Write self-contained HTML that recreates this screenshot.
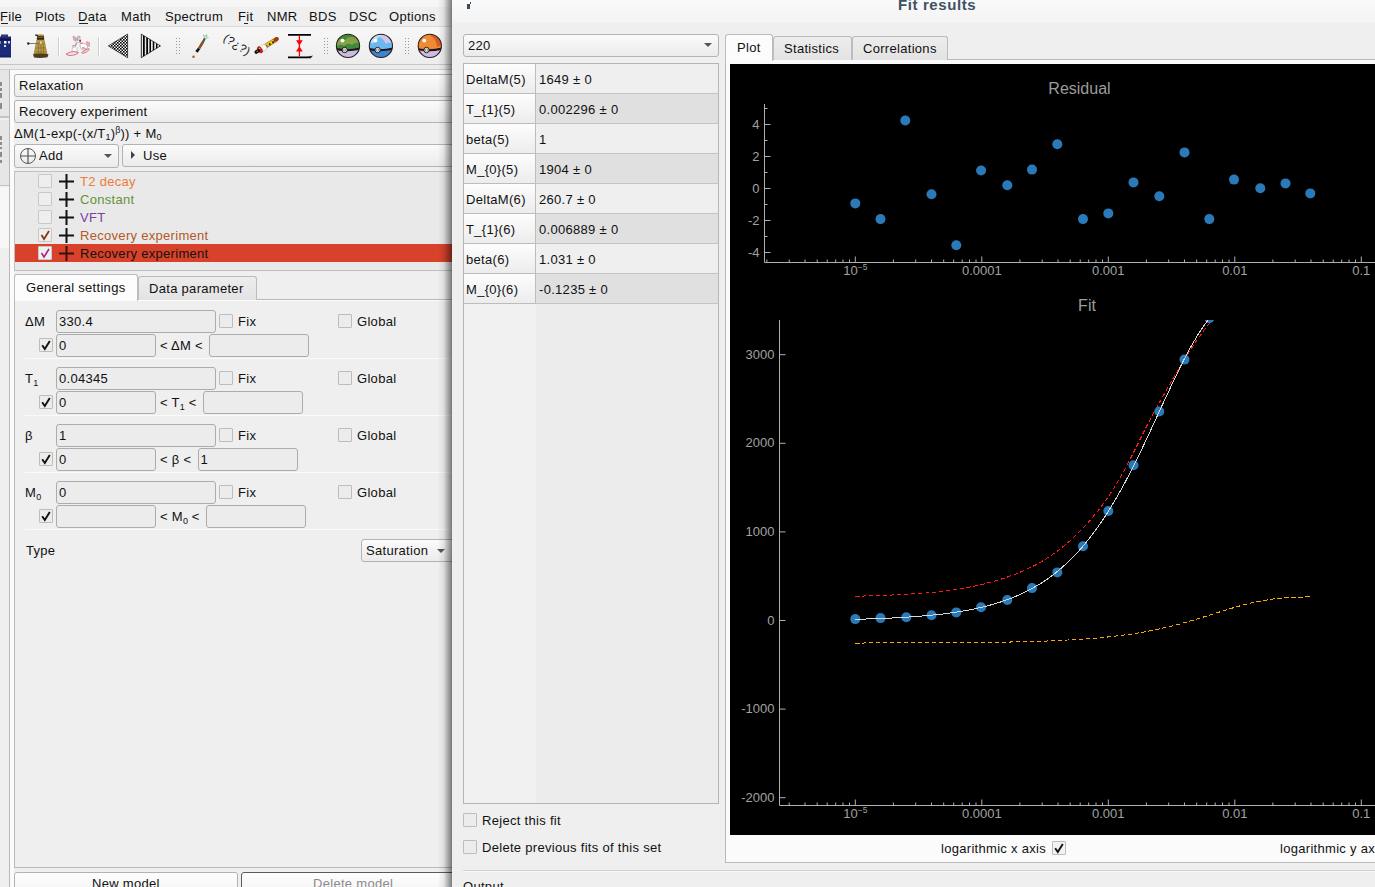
<!DOCTYPE html><html><head><meta charset="utf-8"><style>
*{box-sizing:border-box}
body{margin:0;width:1375px;height:887px;overflow:hidden;background:#efefef;position:relative;font-family:"Liberation Sans",sans-serif;font-size:13px;letter-spacing:.3px;color:#111}
.ab{position:absolute}
.t{position:absolute;white-space:nowrap;line-height:15px}
.btn{position:absolute;border:1px solid #b3b3b3;border-radius:3px;background:linear-gradient(#fbfbfb,#ebebeb)}
.ed{position:absolute;border:1px solid #acacac;border-radius:3px;background:#ececec}
.cb{position:absolute;width:14px;height:14px;border:1px solid #bdbdbd;border-radius:1px;background:#ececec}
.ck{position:absolute;left:1px;top:-2px;font-size:14px;line-height:14px;font-weight:bold;letter-spacing:0;color:#111}
.sep{position:absolute;height:1px;background:#dcdcdc;border-bottom:1px solid #fafafa}
.arr{position:absolute;width:0;height:0;border-left:5px solid transparent;border-right:5px solid transparent;border-top:5px solid #555}
</style></head><body>
<div class="ab" style="left:0;top:0;width:452px;height:7px;background:#f6f6f6"></div>
<div class="ab" style="left:0;top:7px;width:452px;height:20px;background:#efefef;border-bottom:1px solid #dadada"></div>
<div class="t" style="left:0px;top:9px">File</div>
<div class="t" style="left:35px;top:9px">Plots</div>
<div class="t" style="left:78px;top:9px">Data</div>
<div class="t" style="left:121px;top:9px">Math</div>
<div class="t" style="left:165px;top:9px">Spectrum</div>
<div class="t" style="left:238px;top:9px">Fit</div>
<div class="t" style="left:267px;top:9px">NMR</div>
<div class="t" style="left:309px;top:9px">BDS</div>
<div class="t" style="left:349px;top:9px">DSC</div>
<div class="t" style="left:389px;top:9px">Options</div>
<div class="ab" style="left:1px;top:23px;width:7px;height:1px;background:#222"></div>
<div class="ab" style="left:79px;top:23px;width:9px;height:1px;background:#222"></div>
<div class="ab" style="left:244px;top:23px;width:4px;height:1px;background:#222"></div>
<div class="ab" style="left:0;top:27px;width:452px;height:38px;background:linear-gradient(#f7f7f7,#ededed);border-bottom:1px solid #c6c6c6"></div>
<div class="ab" style="left:0;top:65px;width:452px;height:5px;background:#ececec;border-bottom:1px solid #cfcfcf"></div>
<svg class="ab" style="left:0;top:0" width="452" height="70" viewBox="0 0 452 70"><defs><pattern id="chk" width="3" height="3" patternUnits="userSpaceOnUse"><rect width="3" height="3" fill="#fff"/><rect width="1.6" height="1.6" fill="#000"/><rect x="1.5" y="1.5" width="1.6" height="1.6" fill="#000"/></pattern><pattern id="str" width="3.2" height="4" patternUnits="userSpaceOnUse" x="141.5"><rect width="3.2" height="4" fill="#e8e8e8"/><rect x="1.6" width="1.6" height="4" fill="#000"/></pattern><radialGradient id="gold" cx=".4" cy=".4" r=".7"><stop offset="0" stop-color="#e0c070"/><stop offset="1" stop-color="#8a6a2a"/></radialGradient></defs><rect x="-2" y="36.5" width="13" height="20" fill="#1d2a7a"/><rect x="1" y="34.5" width="7" height="2.5" fill="#2a3580"/><rect x="0" y="38.5" width="11" height="2" fill="#0e1540"/><rect x="4" y="41" width="2.5" height="2.5" fill="#fff"/><rect x="8" y="41" width="2" height="2.5" fill="#c8d0ff"/><rect x="4" y="45" width="2" height="2" fill="#dde"/><rect x="-1" y="41" width="2" height="3" fill="#889"/><rect x="-1" y="55.5" width="12" height="2" fill="#15206a"/><path d="M36.5 40 L44.5 40 L47.5 54.5 L33.5 54.5 Z" fill="#a8893c"/><path d="M37 34.8 Q40.5 33.8 44 34.8 L44.3 40 L36.7 40 Z" fill="#b39246"/><rect x="37" y="36.3" width="7" height="3.4" fill="#2e2410"/><path d="M37.3 37.5 H43.7" stroke="#9a8040" stroke-width=".6"/><path d="M36.5 41.2 H44.5 M35.8 46 H45.5 M35 50 H46.3" stroke="#d8c070" stroke-width=".7" opacity=".8"/><path d="M38.5 45 V53 M41 45 V53 M43.5 45 V53" stroke="#7a6020" stroke-width=".7" opacity=".7"/><rect x="40" y="41.5" width="1.6" height="2.2" fill="#f0e0a0"/><path d="M33 54.3 Q40 52.5 48.5 54.3 L47.5 57.2 Q40 58.5 34 57.5 Z" fill="#4a3c1c"/><path d="M28 43.5 H40" stroke="#8a7a60" stroke-width="1"/><circle cx="28.3" cy="43.5" r="1.2" fill="#222"/><path d="M35.3 35 L38 35.6" stroke="#222" stroke-width="1.4"/><path d="M58.5 37V56" stroke="#cfcfcf"/><path d="M59.5 37V56" stroke="#fff"/><path d="M98.5 37V56" stroke="#cfcfcf"/><path d="M99.5 37V56" stroke="#fff"/><g stroke-linejoin="round"><path d="M73 36 L76 37.5 L75.5 41 L73.5 40 Z" fill="#f2a8b4" stroke="#d88894" stroke-width=".6"/><path d="M78 36 L80.2 36.5 L79.5 39.5 L77.8 39 Z" fill="#f2a8b4" stroke="#d88894" stroke-width=".6"/><path d="M75.5 38 Q78 36.5 80 38.5 L80.5 42 L77 43 L75.5 41 Z" fill="#f4f4f4" stroke="#a0a0a0" stroke-width=".6"/><ellipse cx="77.3" cy="39.5" rx="1.2" ry="1.6" fill="#6ab0e0"/><rect x="79.2" y="39.8" width="1.8" height="2" fill="#e01818"/><path d="M76.5 42.5 L75.5 47 L72.5 47.5 L72 51.5 L74.5 53 L77 52 L77 47" fill="#fafafa" stroke="#b8b8b8" stroke-width=".7"/><path d="M72 46 L76 45.5 M75 44 h2" stroke="#c06070" stroke-width=".8" fill="none"/><path d="M66 54 Q70 51.5 74 51.5 L78.5 52.5 Q76 55.5 69 55.5 Z" fill="#f6e0e4" stroke="#c85868" stroke-width=".8"/><path d="M86.5 41.5 L89.5 42.5 L89.5 46.5 L87 45.5 Z" fill="#f2a8b4" stroke="#d88894" stroke-width=".6"/><path d="M80 43.5 Q84 42.5 87 44.5 L87.5 48 L85 50 L81.5 49.5 Q79.5 46 80 43.5 Z" fill="#fafafa" stroke="#a8a8a8" stroke-width=".7"/><path d="M82 48 Q84 47.5 85.5 48.5" stroke="#c04858" stroke-width=".9" fill="none"/><path d="M81.5 52.5 Q85 50 88.5 48.5 L89.5 49.5 Q86 53 82.5 53.5 Z" fill="#f6e0e4" stroke="#c85868" stroke-width=".8"/><path d="M80.5 42.8 L82.5 43.5" stroke="#d04050" stroke-width=".8"/></g><path d="M108.4 45.9 L127.6 34.1 L127.6 57.7 Z" fill="url(#chk)" stroke="#111" stroke-width=".7"/><path d="M141.3 34.1 L160.5 45.9 L141.3 57.7 Z" fill="url(#str)" stroke="#111" stroke-width=".7"/><rect x="176.0" y="38" width="1" height="1" fill="#9a9a9a"/><rect x="176.0" y="41" width="1" height="1" fill="#9a9a9a"/><rect x="176.0" y="44" width="1" height="1" fill="#9a9a9a"/><rect x="176.0" y="47" width="1" height="1" fill="#9a9a9a"/><rect x="176.0" y="50" width="1" height="1" fill="#9a9a9a"/><rect x="176.0" y="53" width="1" height="1" fill="#9a9a9a"/><rect x="179.0" y="38" width="1" height="1" fill="#9a9a9a"/><rect x="179.0" y="41" width="1" height="1" fill="#9a9a9a"/><rect x="179.0" y="44" width="1" height="1" fill="#9a9a9a"/><rect x="179.0" y="47" width="1" height="1" fill="#9a9a9a"/><rect x="179.0" y="50" width="1" height="1" fill="#9a9a9a"/><rect x="179.0" y="53" width="1" height="1" fill="#9a9a9a"/><rect x="324.0" y="38" width="1" height="1" fill="#9a9a9a"/><rect x="324.0" y="41" width="1" height="1" fill="#9a9a9a"/><rect x="324.0" y="44" width="1" height="1" fill="#9a9a9a"/><rect x="324.0" y="47" width="1" height="1" fill="#9a9a9a"/><rect x="324.0" y="50" width="1" height="1" fill="#9a9a9a"/><rect x="324.0" y="53" width="1" height="1" fill="#9a9a9a"/><rect x="327.0" y="38" width="1" height="1" fill="#9a9a9a"/><rect x="327.0" y="41" width="1" height="1" fill="#9a9a9a"/><rect x="327.0" y="44" width="1" height="1" fill="#9a9a9a"/><rect x="327.0" y="47" width="1" height="1" fill="#9a9a9a"/><rect x="327.0" y="50" width="1" height="1" fill="#9a9a9a"/><rect x="327.0" y="53" width="1" height="1" fill="#9a9a9a"/><rect x="405.0" y="38" width="1" height="1" fill="#9a9a9a"/><rect x="405.0" y="41" width="1" height="1" fill="#9a9a9a"/><rect x="405.0" y="44" width="1" height="1" fill="#9a9a9a"/><rect x="405.0" y="47" width="1" height="1" fill="#9a9a9a"/><rect x="405.0" y="50" width="1" height="1" fill="#9a9a9a"/><rect x="405.0" y="53" width="1" height="1" fill="#9a9a9a"/><rect x="408.0" y="38" width="1" height="1" fill="#9a9a9a"/><rect x="408.0" y="41" width="1" height="1" fill="#9a9a9a"/><rect x="408.0" y="44" width="1" height="1" fill="#9a9a9a"/><rect x="408.0" y="47" width="1" height="1" fill="#9a9a9a"/><rect x="408.0" y="50" width="1" height="1" fill="#9a9a9a"/><rect x="408.0" y="53" width="1" height="1" fill="#9a9a9a"/><path d="M193.5 56.5 L197 51" stroke="#f0ecd8" stroke-width="2.2"/><circle cx="193.5" cy="56.8" r="1.3" fill="#b06030"/><path d="M196.5 51.8 L199 48.5" stroke="#151515" stroke-width="2.8"/><path d="M199 48.5 L203.5 41" stroke="#8a5028" stroke-width="2.6"/><path d="M203.5 41 L205 38" stroke="#1a5a40" stroke-width="2"/><path d="M204.5 38.5 L203.5 34.5 M205 38.5 L208.5 37.5" stroke="#b0b0b0" stroke-width="1"/><path d="M205.5 36.5 L207 35" stroke="#40d040" stroke-width="1.5"/><text x="0" y="0" font-family="Liberation Sans" font-size="11.5" letter-spacing=".4" fill="#111" transform="translate(222.5,40) rotate(33)">(?¿?)</text><path d="M265.5 46.3 L276.2 39.4" stroke="#9a6a10" stroke-width="4.6" stroke-linecap="round"/><path d="M265.5 46.3 L276.2 39.4" stroke="#f2c418" stroke-width="3.4" stroke-linecap="round"/><path d="M275.2 40 L277 38.8" stroke="#a03818" stroke-width="3.6" stroke-linecap="round"/><circle cx="266.6" cy="46.2" r=".95" fill="#111"/><circle cx="269.8" cy="44.2" r=".95" fill="#111"/><circle cx="273" cy="42.2" r=".95" fill="#111"/><ellipse cx="263" cy="48" rx="3.9" ry="3.3" fill="#fafafa" stroke="#b8b8b8" stroke-width=".6" transform="rotate(-33 263 48)"/><ellipse cx="260" cy="49.8" rx="2.1" ry="3.5" fill="#d81c1c" stroke="#901010" stroke-width=".5" transform="rotate(-33 260 49.8)"/><circle cx="259.6" cy="48.4" r=".7" fill="#f8b0b0"/><path d="M256.3 52 L258.3 50.7" stroke="#111" stroke-width="3.6" stroke-linecap="round"/><path d="M256.7 51.6 L258 50.9" stroke="#e8b818" stroke-width="1"/><path d="M288 34.9 H311 M288 57.3 H311" stroke="#000" stroke-width="1.7"/><path d="M307 57 L313 55.6 L311 58 Z" fill="#222"/><path d="M299.4 35.5 V56.5" stroke="#ff0000" stroke-width="1.3"/><path d="M296 40.3 H302.8 L299.4 45.4 Z M296 51.6 H302.8 L299.4 46.2 Z" fill="#ff0000"/><clipPath id="bc348"><circle cx="348" cy="45.9" r="11.6"/></clipPath><circle cx="348" cy="45.9" r="11.6" fill="#3f8a3a"/><g clip-path="url(#bc348)"><path d="M336 41 Q340 37 345 40 Q349 35 356 38 L361 44 Q356 41 352 45 Q348 42 344 46 Q340 43 336 47 Z" fill="#b8b050" opacity=".6"/><path d="M335.4 49.1 Q348 51.6 360.6 48.6 V58.5 H335.4 Z" fill="#c9bde6"/><path d="M335.4 49.1 Q348 51.6 360.6 48.6" stroke="#1e1414" stroke-width="2.2" fill="none"/></g><circle cx="348" cy="45.9" r="11.6" fill="none" stroke="#2a1e1e" stroke-width="1.1"/><circle cx="344.7" cy="50.0" r="2.7" fill="#f4f4f4" stroke="#1e1414" stroke-width="1"/><circle cx="344.7" cy="50.0" r="1.2" fill="none" stroke="#666" stroke-width=".6"/><ellipse cx="342.5" cy="40.6" rx="2" ry="1.9" fill="#fff"/><clipPath id="bc380"><circle cx="380.9" cy="45.9" r="11.6"/></clipPath><circle cx="380.9" cy="45.9" r="11.6" fill="#6ab8f0"/><g clip-path="url(#bc380)"><path d="M380 33 L393 35 L393 44 Q388 41 386 44 Q383 38 379 37 Z" fill="#cfc6ea"/><path d="M370 40 Q375 34 381 35 Q377 39 372 44 Z" fill="#b8e4fa"/><path d="M368.29999999999995 49.1 Q380.9 51.6 393.5 48.6 V58.5 H368.29999999999995 Z" fill="#3a86d6"/><path d="M368.29999999999995 49.1 Q380.9 51.6 393.5 48.6" stroke="#1e1414" stroke-width="2.2" fill="none"/></g><circle cx="380.9" cy="45.9" r="11.6" fill="none" stroke="#2a1e1e" stroke-width="1.1"/><circle cx="377.59999999999997" cy="50.0" r="2.7" fill="#f4f4f4" stroke="#1e1414" stroke-width="1"/><circle cx="377.59999999999997" cy="50.0" r="1.2" fill="none" stroke="#666" stroke-width=".6"/><ellipse cx="375.4" cy="40.6" rx="2" ry="1.9" fill="#fff"/><clipPath id="bc429"><circle cx="429.8" cy="45.9" r="11.6"/></clipPath><circle cx="429.8" cy="45.9" r="11.6" fill="#f08a30"/><g clip-path="url(#bc429)"><path d="M431 33 Q440 35 443 44 L437 47 Q437 40 430 35 Z" fill="#d85a28"/><path d="M417.2 49.1 Q429.8 51.6 442.40000000000003 48.6 V58.5 H417.2 Z" fill="#c9bde6"/><path d="M417.2 49.1 Q429.8 51.6 442.40000000000003 48.6" stroke="#1e1414" stroke-width="2.2" fill="none"/></g><circle cx="429.8" cy="45.9" r="11.6" fill="none" stroke="#2a1e1e" stroke-width="1.1"/><circle cx="426.5" cy="50.0" r="2.7" fill="#f4f4f4" stroke="#1e1414" stroke-width="1"/><circle cx="426.5" cy="50.0" r="1.2" fill="none" stroke="#666" stroke-width=".6"/><ellipse cx="424.3" cy="40.6" rx="2" ry="1.9" fill="#fff"/></svg>
<div class="ab" style="left:0;top:70px;width:10px;height:817px;background:#efefef;border-right:1px solid #b8b8b8"></div>
<div class="ab" style="left:0;top:70px;width:9px;height:48px;background:#e6e6e6;border-bottom:2px solid #c4c4c4"></div>
<div class="ab" style="left:0;top:120px;width:9px;height:66px;background:#e6e6e6;border-bottom:1px solid #c4c4c4"></div>
<div class="ab" style="left:0;top:187px;width:9px;height:61px;background:#f7f7f7"></div>
<div class="ab" style="left:0;top:82px;width:2px;height:4px;background:#8c8c8c"></div>
<div class="ab" style="left:0;top:88px;width:2px;height:3px;background:#8c8c8c"></div>
<div class="ab" style="left:0;top:93px;width:2px;height:5px;background:#8c8c8c"></div>
<div class="ab" style="left:0;top:103px;width:2px;height:6px;background:#8c8c8c"></div>
<div class="ab" style="left:0;top:136px;width:2px;height:4px;background:#8c8c8c"></div>
<div class="ab" style="left:0;top:142px;width:2px;height:3px;background:#8c8c8c"></div>
<div class="ab" style="left:0;top:147px;width:2px;height:2px;background:#8c8c8c"></div>
<div class="ab" style="left:0;top:152px;width:2px;height:5px;background:#8c8c8c"></div>
<div class="ab" style="left:0;top:160px;width:2px;height:3px;background:#8c8c8c"></div>
<div class="ab" style="left:10px;top:70px;width:442px;height:817px;background:#efefef"></div><div class="ab" style="left:10px;top:70px;width:4px;height:817px;background:#fbfbfb"></div><div class="ab" style="left:10px;top:70px;width:442px;height:4px;background:#fbfbfb"></div>
<div class="btn" style="left:14px;top:74px;width:450px;height:23px"></div>
<div class="t" style="left:19px;top:78px">Relaxation</div>
<div class="btn" style="left:14px;top:100px;width:450px;height:23px"></div>
<div class="t" style="left:19px;top:104px">Recovery experiment</div>
<div class="t" style="left:14px;top:126px">ΔM(1-exp(-(x/T<sub style="font-size:9px;letter-spacing:0;vertical-align:-2px;line-height:0">1</sub>)<sup style="font-size:9px;letter-spacing:0;vertical-align:5px;line-height:0">β</sup>)) + M<sub style="font-size:9px;letter-spacing:0;vertical-align:-2px;line-height:0">0</sub></div>
<div class="btn" style="left:14px;top:144px;width:105px;height:24px"></div>
<svg class="ab" style="left:19px;top:147px" width="18" height="18"><circle cx="9" cy="9" r="7.5" fill="none" stroke="#555" stroke-width="1"/><path d="M9 2V16M2 9H16" stroke="#555" stroke-width="1.2"/></svg>
<div class="t" style="left:39px;top:148px">Add</div>
<div class="arr" style="left:104px;top:154px;border-width:4.5px 4px 0 4px"></div>
<div class="btn" style="left:122px;top:144px;width:340px;height:23px"></div>
<div class="ab" style="left:131px;top:151px;width:0;height:0;border-top:4px solid transparent;border-bottom:4px solid transparent;border-left:4px solid #444"></div>
<div class="t" style="left:143px;top:148px">Use</div>
<div class="ab" style="left:14px;top:171px;width:450px;height:100px;background:#e9e9e9;border:1px solid #c0c0c0"></div>
<div class="cb" style="left:38px;top:174px;width:14px;height:14px;border-color:#c8c8c8;background:#eeeeee"></div>
<svg class="ab" style="left:57.5px;top:173px" width="17" height="17"><path d="M8.5 1V16M1 8.5H16" stroke="#111" stroke-width="2"/></svg>
<div class="t" style="left:80px;top:174px;color:#ee7a3c">T2 decay</div>
<div class="cb" style="left:38px;top:192px;width:14px;height:14px;border-color:#c8c8c8;background:#eeeeee"></div>
<svg class="ab" style="left:57.5px;top:191px" width="17" height="17"><path d="M8.5 1V16M1 8.5H16" stroke="#111" stroke-width="2"/></svg>
<div class="t" style="left:80px;top:192px;color:#64923a">Constant</div>
<div class="cb" style="left:38px;top:210px;width:14px;height:14px;border-color:#c8c8c8;background:#eeeeee"></div>
<svg class="ab" style="left:57.5px;top:209px" width="17" height="17"><path d="M8.5 1V16M1 8.5H16" stroke="#111" stroke-width="2"/></svg>
<div class="t" style="left:80px;top:210px;color:#7b3fa0">VFT</div>
<div class="cb" style="left:38px;top:228px;width:14px;height:14px;border-color:#c8c8c8;background:#eeeeee"></div>
<svg class="ab" style="left:39px;top:229px" width="12" height="12"><path d="M2.5 6 L5 10 L10 2" fill="none" stroke="#8a3b12" stroke-width="1.8"/></svg>
<svg class="ab" style="left:57.5px;top:227px" width="17" height="17"><path d="M8.5 1V16M1 8.5H16" stroke="#111" stroke-width="2"/></svg>
<div class="t" style="left:80px;top:228px;color:#b15a2a">Recovery experiment</div>
<div class="ab" style="left:15px;top:244px;width:437px;height:18px;background:#d8422a"></div>
<div class="cb" style="left:38px;top:246px;width:14px;height:14px;border-color:#c8c8c8;background:#f0f0f0"></div>
<svg class="ab" style="left:39px;top:247px" width="12" height="12"><path d="M2.5 6 L5 10 L10 2" fill="none" stroke="#b0207a" stroke-width="1.6"/></svg>
<svg class="ab" style="left:57.5px;top:245px" width="17" height="17"><path d="M8.5 1V16M1 8.5H16" stroke="#3a1008" stroke-width="2"/></svg>
<div class="t" style="left:80px;top:246px;color:#111">Recovery experiment</div>
<div class="ab" style="left:14px;top:299px;width:450px;height:569px;border:1px solid #b9b9b9;background:#efefef"></div>
<div class="ab" style="left:15px;top:300px;width:437px;height:1px;background:#fcfcfc"></div>
<div class="ab" style="left:138px;top:276px;width:119px;height:24px;border:1px solid #bcbcbc;border-bottom:none;border-radius:3px 3px 0 0;background:linear-gradient(#ededed,#e3e3e3)"></div>
<div class="t" style="left:149px;top:281px">Data parameter</div>
<div class="ab" style="left:14px;top:274px;width:124px;height:27px;border:1px solid #bcbcbc;border-bottom:none;border-radius:3px 3px 0 0;background:#fcfcfc"></div>
<div class="t" style="left:26px;top:280px">General settings</div>
<div class="t" style="left:25px;top:314px">ΔM</div>
<div class="ed" style="left:56px;top:310px;width:160px;height:23px"></div>
<div class="t" style="left:59px;top:314px">330.4</div>
<div class="cb" style="left:219px;top:314px"></div>
<div class="t" style="left:238px;top:314px">Fix</div>
<div class="cb" style="left:338px;top:314px"></div>
<div class="t" style="left:357px;top:314px">Global</div>
<div class="cb" style="left:39px;top:338px"></div>
<svg class="ab" style="left:40px;top:339px" width="12" height="12"><path d="M2.2 6.2 L4.8 10 L9.8 2" fill="none" stroke="#111" stroke-width="1.9"/></svg>
<div class="ed" style="left:56px;top:334px;width:100px;height:23px"></div>
<div class="t" style="left:59px;top:338px">0</div>
<div class="t" style="left:160px;top:338px">< ΔM <</div>
<div class="ed" style="left:209px;top:334px;width:100px;height:23px"></div>
<div class="t" style="left:211.5px;top:338px"></div>
<div class="sep" style="left:25px;top:358px;width:430px"></div>
<div class="t" style="left:25px;top:371px">T<sub style="font-size:9px;letter-spacing:0;vertical-align:-3px;line-height:0">1</sub></div>
<div class="ed" style="left:56px;top:367px;width:160px;height:23px"></div>
<div class="t" style="left:59px;top:371px">0.04345</div>
<div class="cb" style="left:219px;top:371px"></div>
<div class="t" style="left:238px;top:371px">Fix</div>
<div class="cb" style="left:338px;top:371px"></div>
<div class="t" style="left:357px;top:371px">Global</div>
<div class="cb" style="left:39px;top:395px"></div>
<svg class="ab" style="left:40px;top:396px" width="12" height="12"><path d="M2.2 6.2 L4.8 10 L9.8 2" fill="none" stroke="#111" stroke-width="1.9"/></svg>
<div class="ed" style="left:56px;top:391px;width:100px;height:23px"></div>
<div class="t" style="left:59px;top:395px">0</div>
<div class="t" style="left:160px;top:395px">< T<sub style="font-size:9px;letter-spacing:0;vertical-align:-3px;line-height:0">1</sub> <</div>
<div class="ed" style="left:203px;top:391px;width:100px;height:23px"></div>
<div class="t" style="left:205.5px;top:395px"></div>
<div class="sep" style="left:25px;top:415px;width:430px"></div>
<div class="t" style="left:25px;top:428px">β</div>
<div class="ed" style="left:56px;top:424px;width:160px;height:23px"></div>
<div class="t" style="left:59px;top:428px">1</div>
<div class="cb" style="left:219px;top:428px"></div>
<div class="t" style="left:238px;top:428px">Fix</div>
<div class="cb" style="left:338px;top:428px"></div>
<div class="t" style="left:357px;top:428px">Global</div>
<div class="cb" style="left:39px;top:452px"></div>
<svg class="ab" style="left:40px;top:453px" width="12" height="12"><path d="M2.2 6.2 L4.8 10 L9.8 2" fill="none" stroke="#111" stroke-width="1.9"/></svg>
<div class="ed" style="left:56px;top:448px;width:100px;height:23px"></div>
<div class="t" style="left:59px;top:452px">0</div>
<div class="t" style="left:160px;top:452px">< β <</div>
<div class="ed" style="left:198px;top:448px;width:100px;height:23px"></div>
<div class="t" style="left:200.5px;top:452px">1</div>
<div class="sep" style="left:25px;top:472px;width:430px"></div>
<div class="t" style="left:25px;top:485px">M<sub style="font-size:9px;letter-spacing:0;vertical-align:-3px;line-height:0">0</sub></div>
<div class="ed" style="left:56px;top:481px;width:160px;height:23px"></div>
<div class="t" style="left:59px;top:485px">0</div>
<div class="cb" style="left:219px;top:485px"></div>
<div class="t" style="left:238px;top:485px">Fix</div>
<div class="cb" style="left:338px;top:485px"></div>
<div class="t" style="left:357px;top:485px">Global</div>
<div class="cb" style="left:39px;top:509px"></div>
<svg class="ab" style="left:40px;top:510px" width="12" height="12"><path d="M2.2 6.2 L4.8 10 L9.8 2" fill="none" stroke="#111" stroke-width="1.9"/></svg>
<div class="ed" style="left:56px;top:505px;width:100px;height:23px"></div>
<div class="t" style="left:59px;top:509px"></div>
<div class="t" style="left:160px;top:509px">< M<sub style="font-size:9px;letter-spacing:0;vertical-align:-3px;line-height:0">0</sub> <</div>
<div class="ed" style="left:206px;top:505px;width:100px;height:23px"></div>
<div class="t" style="left:208.5px;top:509px"></div>
<div class="sep" style="left:25px;top:529px;width:430px"></div>
<div class="t" style="left:26px;top:543px">Type</div>
<div class="btn" style="left:361px;top:539px;width:100px;height:23px"></div>
<div class="t" style="left:366px;top:543px">Saturation</div>
<div class="arr" style="left:437px;top:549px;border-width:4px 4px 0 4px"></div>
<div class="btn" style="left:14px;top:872px;width:224px;height:24px;background:linear-gradient(#fefefe,#f2f2f2)"></div>
<div class="t" style="left:92px;top:876px">New model</div>
<div class="btn" style="left:241px;top:872px;width:224px;height:24px;border-color:#5a5a5a;background:linear-gradient(#fefefe,#f2f2f2)"></div>
<div class="t" style="left:313px;top:876px;color:#8a8a8a">Delete model</div>
<div class="ab" style="left:438px;top:0;width:14px;height:887px;background:linear-gradient(90deg,rgba(0,0,0,0),rgba(0,0,0,.08) 40%,rgba(0,0,0,.5))"></div>
<div class="ab" style="left:452px;top:0;width:923px;height:887px;background:#efefef"></div>
<div class="ab" style="left:452px;top:0;width:923px;height:23px;background:linear-gradient(#fafafa,#f3f3f3)"></div>
<div class="ab" style="left:467px;top:4px;width:3px;height:5px;background:#3a4c58"></div><div class="ab" style="left:470px;top:2px;width:1px;height:2px;background:#3a4c58"></div>
<div class="t" style="left:898px;top:-3px;font-weight:bold;font-size:15px;letter-spacing:.6px;color:#3e5262">Fit results</div>
<div class="btn" style="left:463px;top:34px;width:256px;height:23px"></div>
<div class="t" style="left:468px;top:38px">220</div>
<div class="arr" style="left:704px;top:43px;border-width:4.5px 4px 0 4px"></div>
<div class="ab" style="left:463px;top:63px;width:256px;height:741px;border:1px solid #b5b5b5;background:#ececec"></div>
<div class="ab" style="left:464px;top:64px;width:72px;height:739px;background:#f0f0f0"></div>
<div class="ab" style="left:464px;top:64px;width:72px;height:30px;background:linear-gradient(#fdfdfd,#ececec);border-right:1px solid #bdbdbd;border-bottom:1px solid #bdbdbd"></div>
<div class="ab" style="left:536px;top:64px;width:182px;height:30px;background:#efefef;border-bottom:1px solid #c4c4c4"></div>
<div class="t" style="left:466px;top:72px">DeltaM(5)</div>
<div class="t" style="left:539px;top:72px">1649 ± 0</div>
<div class="ab" style="left:464px;top:94px;width:72px;height:30px;background:linear-gradient(#fdfdfd,#ececec);border-right:1px solid #bdbdbd;border-bottom:1px solid #bdbdbd"></div>
<div class="ab" style="left:536px;top:94px;width:182px;height:30px;background:#e0e0e0;border-bottom:1px solid #c4c4c4"></div>
<div class="t" style="left:466px;top:102px">T_{1}(5)</div>
<div class="t" style="left:539px;top:102px">0.002296 ± 0</div>
<div class="ab" style="left:464px;top:124px;width:72px;height:30px;background:linear-gradient(#fdfdfd,#ececec);border-right:1px solid #bdbdbd;border-bottom:1px solid #bdbdbd"></div>
<div class="ab" style="left:536px;top:124px;width:182px;height:30px;background:#efefef;border-bottom:1px solid #c4c4c4"></div>
<div class="t" style="left:466px;top:132px">beta(5)</div>
<div class="t" style="left:539px;top:132px">1</div>
<div class="ab" style="left:464px;top:154px;width:72px;height:30px;background:linear-gradient(#fdfdfd,#ececec);border-right:1px solid #bdbdbd;border-bottom:1px solid #bdbdbd"></div>
<div class="ab" style="left:536px;top:154px;width:182px;height:30px;background:#e0e0e0;border-bottom:1px solid #c4c4c4"></div>
<div class="t" style="left:466px;top:162px">M_{0}(5)</div>
<div class="t" style="left:539px;top:162px">1904 ± 0</div>
<div class="ab" style="left:464px;top:184px;width:72px;height:30px;background:linear-gradient(#fdfdfd,#ececec);border-right:1px solid #bdbdbd;border-bottom:1px solid #bdbdbd"></div>
<div class="ab" style="left:536px;top:184px;width:182px;height:30px;background:#efefef;border-bottom:1px solid #c4c4c4"></div>
<div class="t" style="left:466px;top:192px">DeltaM(6)</div>
<div class="t" style="left:539px;top:192px">260.7 ± 0</div>
<div class="ab" style="left:464px;top:214px;width:72px;height:30px;background:linear-gradient(#fdfdfd,#ececec);border-right:1px solid #bdbdbd;border-bottom:1px solid #bdbdbd"></div>
<div class="ab" style="left:536px;top:214px;width:182px;height:30px;background:#e0e0e0;border-bottom:1px solid #c4c4c4"></div>
<div class="t" style="left:466px;top:222px">T_{1}(6)</div>
<div class="t" style="left:539px;top:222px">0.006889 ± 0</div>
<div class="ab" style="left:464px;top:244px;width:72px;height:30px;background:linear-gradient(#fdfdfd,#ececec);border-right:1px solid #bdbdbd;border-bottom:1px solid #bdbdbd"></div>
<div class="ab" style="left:536px;top:244px;width:182px;height:30px;background:#efefef;border-bottom:1px solid #c4c4c4"></div>
<div class="t" style="left:466px;top:252px">beta(6)</div>
<div class="t" style="left:539px;top:252px">1.031 ± 0</div>
<div class="ab" style="left:464px;top:274px;width:72px;height:30px;background:linear-gradient(#fdfdfd,#ececec);border-right:1px solid #bdbdbd;border-bottom:1px solid #bdbdbd"></div>
<div class="ab" style="left:536px;top:274px;width:182px;height:30px;background:#e0e0e0;border-bottom:1px solid #c4c4c4"></div>
<div class="t" style="left:466px;top:282px">M_{0}(6)</div>
<div class="t" style="left:539px;top:282px">-0.1235 ± 0</div>
<div class="cb" style="left:463px;top:813px"></div>
<div class="t" style="left:482px;top:813px">Reject this fit</div>
<div class="cb" style="left:463px;top:840px"></div>
<div class="t" style="left:482px;top:840px">Delete previous fits of this set</div>
<div class="ab" style="left:463px;top:870px;width:912px;height:1px;background:#d2d2d2"></div><div class="ab" style="left:463px;top:871px;width:912px;height:1px;background:#f8f8f8"></div>
<div class="t" style="left:463px;top:879px">Output</div>
<div class="ab" style="left:725px;top:59px;width:660px;height:804px;border:1px solid #b9b9b9;background:#fbfbfb"></div>
<div class="ab" style="left:773px;top:36px;width:79px;height:24px;border:1px solid #bcbcbc;border-bottom:none;border-radius:3px 3px 0 0;background:linear-gradient(#ededed,#e3e3e3)"></div>
<div class="t" style="left:784px;top:41px">Statistics</div>
<div class="ab" style="left:852px;top:36px;width:96px;height:24px;border:1px solid #bcbcbc;border-bottom:none;border-radius:3px 3px 0 0;background:linear-gradient(#ededed,#e3e3e3)"></div>
<div class="t" style="left:863px;top:41px">Correlations</div>
<div class="ab" style="left:725px;top:34px;width:48px;height:27px;border:1px solid #bcbcbc;border-bottom:none;border-radius:3px 3px 0 0;background:#fcfcfc"></div>
<div class="t" style="left:737px;top:40px">Plot</div>
<svg class="ab" style="left:730px;top:64px" width="645" height="771" viewBox="0 0 645 771"><rect width="645" height="771" fill="#000"/><text x="349.5" y="30" fill="#9c9c9c" font-size="16" text-anchor="middle" font-family="Liberation Sans" letter-spacing="0">Residual</text><path d="M34.5 40V198.5H645" fill="none" stroke="#b0b0b0" stroke-width="1"/><path d="M34.5 60.5h6" stroke="#b0b0b0"/><text x="29.5" y="64.5" fill="#a2a2a2" font-size="13" text-anchor="end" font-family="Liberation Sans" letter-spacing="0">4</text><path d="M34.5 92.5h6" stroke="#b0b0b0"/><text x="29.5" y="96.5" fill="#a2a2a2" font-size="13" text-anchor="end" font-family="Liberation Sans" letter-spacing="0">2</text><path d="M34.5 124.5h6" stroke="#b0b0b0"/><text x="29.5" y="128.5" fill="#a2a2a2" font-size="13" text-anchor="end" font-family="Liberation Sans" letter-spacing="0">0</text><path d="M34.5 156.5h6" stroke="#b0b0b0"/><text x="29.5" y="160.5" fill="#a2a2a2" font-size="13" text-anchor="end" font-family="Liberation Sans" letter-spacing="0">-2</text><path d="M34.5 188.5h6" stroke="#b0b0b0"/><text x="29.5" y="192.5" fill="#a2a2a2" font-size="13" text-anchor="end" font-family="Liberation Sans" letter-spacing="0">-4</text><path d="M34.5 44.5h3" stroke="#b0b0b0"/><path d="M34.5 76.5h3" stroke="#b0b0b0"/><path d="M34.5 108.5h3" stroke="#b0b0b0"/><path d="M34.5 140.5h3" stroke="#b0b0b0"/><path d="M34.5 172.5h3" stroke="#b0b0b0"/><path d="M36.9 198.5v-3" stroke="#b0b0b0"/><path d="M59.2 198.5v-3" stroke="#b0b0b0"/><path d="M75.0 198.5v-3" stroke="#b0b0b0"/><path d="M87.2 198.5v-3" stroke="#b0b0b0"/><path d="M97.2 198.5v-3" stroke="#b0b0b0"/><path d="M105.7 198.5v-3" stroke="#b0b0b0"/><path d="M113.0 198.5v-3" stroke="#b0b0b0"/><path d="M119.5 198.5v-3" stroke="#b0b0b0"/><path d="M125.3 198.5v-6" stroke="#b0b0b0"/><path d="M163.4 198.5v-3" stroke="#b0b0b0"/><path d="M185.7 198.5v-3" stroke="#b0b0b0"/><path d="M201.5 198.5v-3" stroke="#b0b0b0"/><path d="M213.7 198.5v-3" stroke="#b0b0b0"/><path d="M223.7 198.5v-3" stroke="#b0b0b0"/><path d="M232.2 198.5v-3" stroke="#b0b0b0"/><path d="M239.5 198.5v-3" stroke="#b0b0b0"/><path d="M246.0 198.5v-3" stroke="#b0b0b0"/><path d="M251.8 198.5v-6" stroke="#b0b0b0"/><path d="M289.9 198.5v-3" stroke="#b0b0b0"/><path d="M312.2 198.5v-3" stroke="#b0b0b0"/><path d="M328.0 198.5v-3" stroke="#b0b0b0"/><path d="M340.2 198.5v-3" stroke="#b0b0b0"/><path d="M350.2 198.5v-3" stroke="#b0b0b0"/><path d="M358.7 198.5v-3" stroke="#b0b0b0"/><path d="M366.0 198.5v-3" stroke="#b0b0b0"/><path d="M372.5 198.5v-3" stroke="#b0b0b0"/><path d="M378.3 198.5v-6" stroke="#b0b0b0"/><path d="M416.4 198.5v-3" stroke="#b0b0b0"/><path d="M438.7 198.5v-3" stroke="#b0b0b0"/><path d="M454.5 198.5v-3" stroke="#b0b0b0"/><path d="M466.7 198.5v-3" stroke="#b0b0b0"/><path d="M476.7 198.5v-3" stroke="#b0b0b0"/><path d="M485.2 198.5v-3" stroke="#b0b0b0"/><path d="M492.5 198.5v-3" stroke="#b0b0b0"/><path d="M499.0 198.5v-3" stroke="#b0b0b0"/><path d="M504.8 198.5v-6" stroke="#b0b0b0"/><path d="M542.9 198.5v-3" stroke="#b0b0b0"/><path d="M565.2 198.5v-3" stroke="#b0b0b0"/><path d="M581.0 198.5v-3" stroke="#b0b0b0"/><path d="M593.2 198.5v-3" stroke="#b0b0b0"/><path d="M603.2 198.5v-3" stroke="#b0b0b0"/><path d="M611.7 198.5v-3" stroke="#b0b0b0"/><path d="M619.0 198.5v-3" stroke="#b0b0b0"/><path d="M625.5 198.5v-3" stroke="#b0b0b0"/><path d="M631.3 198.5v-6" stroke="#b0b0b0"/><text x="125.29999999999995" y="210.5" fill="#a2a2a2" font-size="13" text-anchor="middle" font-family="Liberation Sans" letter-spacing="0">10<tspan font-size="8.5" dy="-4.5">−5</tspan></text><text x="251.79999999999995" y="210.5" fill="#a2a2a2" font-size="13" text-anchor="middle" font-family="Liberation Sans" letter-spacing="0">0.0001</text><text x="378.29999999999995" y="210.5" fill="#a2a2a2" font-size="13" text-anchor="middle" font-family="Liberation Sans" letter-spacing="0">0.001</text><text x="504.79999999999995" y="210.5" fill="#a2a2a2" font-size="13" text-anchor="middle" font-family="Liberation Sans" letter-spacing="0">0.01</text><text x="631.3" y="210.5" fill="#a2a2a2" font-size="13" text-anchor="middle" font-family="Liberation Sans" letter-spacing="0">0.1</text><circle cx="125.3" cy="139.4" r="5" fill="#2a7ab9"/><circle cx="150.5" cy="155.1" r="5" fill="#2a7ab9"/><circle cx="175.3" cy="56.5" r="5" fill="#2a7ab9"/><circle cx="201.5" cy="130.3" r="5" fill="#2a7ab9"/><circle cx="226.3" cy="181.3" r="5" fill="#2a7ab9"/><circle cx="251.1" cy="106.5" r="5" fill="#2a7ab9"/><circle cx="277.3" cy="121.3" r="5" fill="#2a7ab9"/><circle cx="302.0" cy="105.6" r="5" fill="#2a7ab9"/><circle cx="327.3" cy="80.3" r="5" fill="#2a7ab9"/><circle cx="353.0" cy="155.1" r="5" fill="#2a7ab9"/><circle cx="378.3" cy="149.4" r="5" fill="#2a7ab9"/><circle cx="403.5" cy="118.4" r="5" fill="#2a7ab9"/><circle cx="429.3" cy="132.3" r="5" fill="#2a7ab9"/><circle cx="454.5" cy="88.4" r="5" fill="#2a7ab9"/><circle cx="479.3" cy="155.1" r="5" fill="#2a7ab9"/><circle cx="504.0" cy="115.6" r="5" fill="#2a7ab9"/><circle cx="530.3" cy="124.2" r="5" fill="#2a7ab9"/><circle cx="555.5" cy="119.4" r="5" fill="#2a7ab9"/><circle cx="580.3" cy="129.4" r="5" fill="#2a7ab9"/><text x="357" y="247" fill="#9c9c9c" font-size="16" text-anchor="middle" font-family="Liberation Sans" letter-spacing="0">Fit</text><path d="M49.5 256V741.5H645" fill="none" stroke="#b0b0b0" stroke-width="1"/><path d="M49.5 290.7h6" stroke="#b0b0b0"/><text x="44.5" y="294.7" fill="#a2a2a2" font-size="13" text-anchor="end" font-family="Liberation Sans" letter-spacing="0">3000</text><path d="M49.5 379.3h6" stroke="#b0b0b0"/><text x="44.5" y="383.3" fill="#a2a2a2" font-size="13" text-anchor="end" font-family="Liberation Sans" letter-spacing="0">2000</text><path d="M49.5 467.9h6" stroke="#b0b0b0"/><text x="44.5" y="471.9" fill="#a2a2a2" font-size="13" text-anchor="end" font-family="Liberation Sans" letter-spacing="0">1000</text><path d="M49.5 556.5h6" stroke="#b0b0b0"/><text x="44.5" y="560.5" fill="#a2a2a2" font-size="13" text-anchor="end" font-family="Liberation Sans" letter-spacing="0">0</text><path d="M49.5 645.1h6" stroke="#b0b0b0"/><text x="44.5" y="649.1" fill="#a2a2a2" font-size="13" text-anchor="end" font-family="Liberation Sans" letter-spacing="0">-1000</text><path d="M49.5 733.7h6" stroke="#b0b0b0"/><text x="44.5" y="737.7" fill="#a2a2a2" font-size="13" text-anchor="end" font-family="Liberation Sans" letter-spacing="0">-2000</text><path d="M59.2 741.5v-3" stroke="#b0b0b0"/><path d="M75.0 741.5v-3" stroke="#b0b0b0"/><path d="M87.2 741.5v-3" stroke="#b0b0b0"/><path d="M97.2 741.5v-3" stroke="#b0b0b0"/><path d="M105.7 741.5v-3" stroke="#b0b0b0"/><path d="M113.0 741.5v-3" stroke="#b0b0b0"/><path d="M119.5 741.5v-3" stroke="#b0b0b0"/><path d="M125.3 741.5v-6" stroke="#b0b0b0"/><path d="M163.4 741.5v-3" stroke="#b0b0b0"/><path d="M185.7 741.5v-3" stroke="#b0b0b0"/><path d="M201.5 741.5v-3" stroke="#b0b0b0"/><path d="M213.7 741.5v-3" stroke="#b0b0b0"/><path d="M223.7 741.5v-3" stroke="#b0b0b0"/><path d="M232.2 741.5v-3" stroke="#b0b0b0"/><path d="M239.5 741.5v-3" stroke="#b0b0b0"/><path d="M246.0 741.5v-3" stroke="#b0b0b0"/><path d="M251.8 741.5v-6" stroke="#b0b0b0"/><path d="M289.9 741.5v-3" stroke="#b0b0b0"/><path d="M312.2 741.5v-3" stroke="#b0b0b0"/><path d="M328.0 741.5v-3" stroke="#b0b0b0"/><path d="M340.2 741.5v-3" stroke="#b0b0b0"/><path d="M350.2 741.5v-3" stroke="#b0b0b0"/><path d="M358.7 741.5v-3" stroke="#b0b0b0"/><path d="M366.0 741.5v-3" stroke="#b0b0b0"/><path d="M372.5 741.5v-3" stroke="#b0b0b0"/><path d="M378.3 741.5v-6" stroke="#b0b0b0"/><path d="M416.4 741.5v-3" stroke="#b0b0b0"/><path d="M438.7 741.5v-3" stroke="#b0b0b0"/><path d="M454.5 741.5v-3" stroke="#b0b0b0"/><path d="M466.7 741.5v-3" stroke="#b0b0b0"/><path d="M476.7 741.5v-3" stroke="#b0b0b0"/><path d="M485.2 741.5v-3" stroke="#b0b0b0"/><path d="M492.5 741.5v-3" stroke="#b0b0b0"/><path d="M499.0 741.5v-3" stroke="#b0b0b0"/><path d="M504.8 741.5v-6" stroke="#b0b0b0"/><path d="M542.9 741.5v-3" stroke="#b0b0b0"/><path d="M565.2 741.5v-3" stroke="#b0b0b0"/><path d="M581.0 741.5v-3" stroke="#b0b0b0"/><path d="M593.2 741.5v-3" stroke="#b0b0b0"/><path d="M603.2 741.5v-3" stroke="#b0b0b0"/><path d="M611.7 741.5v-3" stroke="#b0b0b0"/><path d="M619.0 741.5v-3" stroke="#b0b0b0"/><path d="M625.5 741.5v-3" stroke="#b0b0b0"/><path d="M631.3 741.5v-6" stroke="#b0b0b0"/><text x="125.29999999999995" y="753.5" fill="#a2a2a2" font-size="13" text-anchor="middle" font-family="Liberation Sans" letter-spacing="0">10<tspan font-size="8.5" dy="-4.5">−5</tspan></text><text x="251.79999999999995" y="753.5" fill="#a2a2a2" font-size="13" text-anchor="middle" font-family="Liberation Sans" letter-spacing="0">0.0001</text><text x="378.29999999999995" y="753.5" fill="#a2a2a2" font-size="13" text-anchor="middle" font-family="Liberation Sans" letter-spacing="0">0.001</text><text x="504.79999999999995" y="753.5" fill="#a2a2a2" font-size="13" text-anchor="middle" font-family="Liberation Sans" letter-spacing="0">0.01</text><text x="631.3" y="753.5" fill="#a2a2a2" font-size="13" text-anchor="middle" font-family="Liberation Sans" letter-spacing="0">0.1</text><clipPath id="c"><rect x="49" y="256" width="700" height="500"/></clipPath><g clip-path="url(#c)"><path d="M125.0,532.3 L126.9,532.3 L128.7,532.2 L130.6,532.1 L132.4,532.1 L134.3,532.0 L136.2,531.9 L138.0,531.9 L139.9,531.8 L141.7,531.7 L143.6,531.7 L145.5,531.6 L147.3,531.5 L149.2,531.5 L151.0,531.4 L152.9,531.3 L154.7,531.3 L156.6,531.2 L158.5,531.1 L160.3,531.0 L162.2,531.0 L164.0,530.9 L165.9,530.8 L167.8,530.7 L169.6,530.6 L171.5,530.5 L173.3,530.4 L175.2,530.3 L177.1,530.2 L178.9,530.1 L180.8,530.0 L182.6,529.9 L184.5,529.8 L186.4,529.7 L188.2,529.5 L190.1,529.4 L191.9,529.3 L193.8,529.1 L195.7,529.0 L197.5,528.8 L199.4,528.6 L201.2,528.5 L203.1,528.3 L204.9,528.1 L206.8,527.9 L208.7,527.7 L210.5,527.5 L212.4,527.3 L214.2,527.1 L216.1,526.8 L218.0,526.6 L219.8,526.3 L221.7,526.1 L223.5,525.8 L225.4,525.5 L227.3,525.2 L229.1,524.9 L231.0,524.6 L232.8,524.3 L234.7,524.0 L236.6,523.6 L238.4,523.3 L240.3,522.9 L242.1,522.6 L244.0,522.2 L245.9,521.8 L247.7,521.4 L249.6,521.0 L251.4,520.5 L253.3,520.1 L255.2,519.6 L257.0,519.1 L258.9,518.7 L260.7,518.2 L262.6,517.6 L264.4,517.1 L266.3,516.6 L268.2,516.0 L270.0,515.5 L271.9,514.9 L273.7,514.3 L275.6,513.7 L277.5,513.0 L279.3,512.4 L281.2,511.7 L283.0,511.0 L284.9,510.3 L286.8,509.6 L288.6,508.8 L290.5,508.0 L292.3,507.3 L294.2,506.4 L296.1,505.6 L297.9,504.7 L299.8,503.8 L301.6,502.9 L303.5,502.0 L305.4,501.0 L307.2,500.0 L309.1,498.9 L310.9,497.9 L312.8,496.8 L314.6,495.7 L316.5,494.5 L318.4,493.3 L320.2,492.1 L322.1,490.8 L323.9,489.5 L325.8,488.2 L327.7,486.8 L329.5,485.4 L331.4,484.0 L333.2,482.5 L335.1,481.0 L337.0,479.4 L338.8,477.8 L340.7,476.2 L342.5,474.5 L344.4,472.8 L346.3,471.0 L348.1,469.2 L350.0,467.3 L351.8,465.4 L353.7,463.4 L355.6,461.4 L357.4,459.4 L359.3,457.3 L361.1,455.1 L363.0,452.9 L364.8,450.7 L366.7,448.4 L368.6,446.0 L370.4,443.5 L372.3,441.0 L374.1,438.5 L376.0,435.9 L377.9,433.2 L379.7,430.4 L381.6,427.6 L383.4,424.7 L385.3,421.7 L387.2,418.7 L389.0,415.5 L390.9,412.4 L392.7,409.1 L394.6,405.7 L396.5,402.3 L398.3,398.8 L400.2,395.2 L402.0,391.5 L403.9,387.8 L405.8,384.0 L407.6,380.3 L409.5,376.5 L411.3,372.8 L413.2,369.1 L415.1,365.4 L416.9,361.8 L418.8,358.3 L420.6,354.8 L422.5,351.3 L424.3,347.8 L426.2,344.4 L428.1,341.1 L429.9,337.7 L431.8,334.4 L433.6,331.1 L435.5,327.8 L437.4,324.5 L439.2,321.2 L441.1,318.0 L442.9,314.8 L444.8,311.6 L446.7,308.5 L448.5,305.3 L450.4,302.2 L452.2,299.1 L454.1,296.1 L456.0,293.1 L457.8,290.2 L459.7,287.2 L461.5,284.4 L463.4,281.5 L465.3,278.7 L467.1,276.0 L469.0,273.3 L470.8,270.7 L472.7,268.1 L474.5,265.6 L476.4,263.1 L478.3,260.7 L480.1,258.3 L482.0,256.1 L483.8,253.8 L485.7,251.7 L487.6,249.6 L489.4,247.5 L491.3,245.5 L493.1,243.5 L495.0,241.5" fill="none" stroke="#ff1a1a" stroke-width="1" stroke-dasharray="4.5 2.5" shape-rendering="crispEdges"/><path d="M125.0,579.0 L127.3,579.0 L129.6,579.0 L131.9,579.0 L134.1,579.0 L136.4,578.9 L138.7,578.9 L141.0,578.9 L143.3,578.9 L145.6,578.9 L147.9,578.9 L150.2,578.9 L152.4,578.9 L154.7,578.9 L157.0,578.9 L159.3,578.9 L161.6,578.9 L163.9,578.9 L166.2,578.9 L168.4,578.9 L170.7,578.9 L173.0,578.9 L175.3,578.9 L177.6,578.9 L179.9,578.9 L182.2,578.9 L184.4,578.8 L186.7,578.8 L189.0,578.8 L191.3,578.8 L193.6,578.8 L195.9,578.8 L198.2,578.8 L200.5,578.8 L202.7,578.8 L205.0,578.8 L207.3,578.7 L209.6,578.7 L211.9,578.7 L214.2,578.7 L216.5,578.7 L218.7,578.7 L221.0,578.7 L223.3,578.7 L225.6,578.6 L227.9,578.6 L230.2,578.6 L232.5,578.6 L234.7,578.6 L237.0,578.5 L239.3,578.5 L241.6,578.5 L243.9,578.5 L246.2,578.5 L248.5,578.4 L250.8,578.4 L253.0,578.4 L255.3,578.4 L257.6,578.3 L259.9,578.3 L262.2,578.3 L264.5,578.2 L266.8,578.2 L269.0,578.2 L271.3,578.1 L273.6,578.1 L275.9,578.1 L278.2,578.0 L280.5,578.0 L282.8,577.9 L285.1,577.9 L287.3,577.8 L289.6,577.8 L291.9,577.7 L294.2,577.7 L296.5,577.6 L298.8,577.5 L301.1,577.5 L303.3,577.4 L305.6,577.4 L307.9,577.3 L310.2,577.2 L312.5,577.1 L314.8,577.1 L317.1,577.0 L319.3,576.9 L321.6,576.8 L323.9,576.7 L326.2,576.6 L328.5,576.5 L330.8,576.4 L333.1,576.3 L335.4,576.2 L337.6,576.0 L339.9,575.9 L342.2,575.8 L344.5,575.7 L346.8,575.5 L349.1,575.4 L351.4,575.2 L353.6,575.1 L355.9,574.9 L358.2,574.7 L360.5,574.5 L362.8,574.4 L365.1,574.2 L367.4,574.0 L369.6,573.8 L371.9,573.6 L374.2,573.3 L376.5,573.1 L378.8,572.9 L381.1,572.6 L383.4,572.4 L385.7,572.1 L387.9,571.8 L390.2,571.5 L392.5,571.2 L394.8,570.9 L397.1,570.6 L399.4,570.3 L401.7,570.0 L403.9,569.6 L406.2,569.2 L408.5,568.9 L410.8,568.5 L413.1,568.1 L415.4,567.7 L417.7,567.3 L419.9,566.8 L422.2,566.4 L424.5,565.9 L426.8,565.4 L429.1,564.9 L431.4,564.4 L433.7,563.9 L436.0,563.4 L438.2,562.9 L440.5,562.3 L442.8,561.7 L445.1,561.2 L447.4,560.6 L449.7,560.0 L452.0,559.3 L454.2,558.7 L456.5,558.1 L458.8,557.4 L461.1,556.7 L463.4,556.1 L465.7,555.4 L468.0,554.7 L470.3,554.0 L472.5,553.3 L474.8,552.6 L477.1,551.9 L479.4,551.2 L481.7,550.4 L484.0,549.7 L486.3,549.0 L488.5,548.3 L490.8,547.6 L493.1,546.9 L495.4,546.1 L497.7,545.4 L500.0,544.8 L502.3,544.1 L504.5,543.4 L506.8,542.7 L509.1,542.1 L511.4,541.5 L513.7,540.9 L516.0,540.3 L518.3,539.7 L520.6,539.2 L522.8,538.6 L525.1,538.1 L527.4,537.7 L529.7,537.2 L532.0,536.8 L534.3,536.4 L536.6,536.0 L538.8,535.6 L541.1,535.3 L543.4,535.0 L545.7,534.7 L548.0,534.5 L550.3,534.3 L552.6,534.1 L554.8,533.9 L557.1,533.7 L559.4,533.6 L561.7,533.4 L564.0,533.3 L566.3,533.2 L568.6,533.1 L570.9,533.1 L573.1,533.0 L575.4,533.0 L577.7,532.9 L580.0,532.9" fill="none" stroke="#ffa500" stroke-width="1" stroke-dasharray="4.5 2.5" shape-rendering="crispEdges"/><circle cx="125.3" cy="555.1" r="5" fill="#2a7ab9"/><circle cx="150.5" cy="554.1" r="5" fill="#2a7ab9"/><circle cx="176.3" cy="553.2" r="5" fill="#2a7ab9"/><circle cx="201.5" cy="551.3" r="5" fill="#2a7ab9"/><circle cx="226.3" cy="548.4" r="5" fill="#2a7ab9"/><circle cx="251.1" cy="543.2" r="5" fill="#2a7ab9"/><circle cx="277.3" cy="536.0" r="5" fill="#2a7ab9"/><circle cx="302.0" cy="524.1" r="5" fill="#2a7ab9"/><circle cx="327.3" cy="508.4" r="5" fill="#2a7ab9"/><circle cx="353.0" cy="482.3" r="5" fill="#2a7ab9"/><circle cx="378.3" cy="447.0" r="5" fill="#2a7ab9"/><circle cx="403.5" cy="401.3" r="5" fill="#2a7ab9"/><circle cx="429.3" cy="347.5" r="5" fill="#2a7ab9"/><circle cx="454.5" cy="295.6" r="5" fill="#2a7ab9"/><circle cx="479.3" cy="254.1" r="5" fill="#2a7ab9"/><path d="M125.3,555.3 L127.2,555.3 L129.0,555.2 L130.9,555.2 L132.7,555.1 L134.6,555.1 L136.4,555.0 L138.3,554.9 L140.2,554.9 L142.0,554.8 L143.9,554.8 L145.7,554.7 L147.6,554.6 L149.5,554.5 L151.3,554.5 L153.2,554.4 L155.0,554.3 L156.9,554.2 L158.7,554.2 L160.6,554.1 L162.5,554.0 L164.3,553.9 L166.2,553.8 L168.0,553.7 L169.9,553.6 L171.7,553.5 L173.6,553.4 L175.5,553.2 L177.3,553.1 L179.2,553.0 L181.0,552.9 L182.9,552.8 L184.7,552.6 L186.6,552.5 L188.5,552.3 L190.3,552.2 L192.2,552.0 L194.0,551.9 L195.9,551.7 L197.8,551.5 L199.6,551.4 L201.5,551.2 L203.3,551.0 L205.2,550.8 L207.0,550.6 L208.9,550.4 L210.8,550.2 L212.6,550.0 L214.5,549.7 L216.3,549.5 L218.2,549.3 L220.0,549.0 L221.9,548.8 L223.8,548.5 L225.6,548.2 L227.5,547.9 L229.3,547.6 L231.2,547.3 L233.1,547.0 L234.9,546.7 L236.8,546.4 L238.6,546.0 L240.5,545.7 L242.3,545.3 L244.2,544.9 L246.1,544.5 L247.9,544.1 L249.8,543.7 L251.6,543.3 L253.5,542.8 L255.3,542.4 L257.2,541.9 L259.1,541.4 L260.9,540.9 L262.8,540.4 L264.6,539.8 L266.5,539.3 L268.3,538.7 L270.2,538.1 L272.1,537.5 L273.9,536.8 L275.8,536.2 L277.6,535.5 L279.5,534.8 L281.4,534.1 L283.2,533.4 L285.1,532.6 L286.9,531.8 L288.8,531.0 L290.6,530.2 L292.5,529.3 L294.4,528.4 L296.2,527.5 L298.1,526.6 L299.9,525.6 L301.8,524.6 L303.6,523.6 L305.5,522.5 L307.4,521.4 L309.2,520.3 L311.1,519.2 L312.9,518.0 L314.8,516.7 L316.7,515.5 L318.5,514.2 L320.4,512.8 L322.2,511.4 L324.1,510.0 L325.9,508.6 L327.8,507.1 L329.7,505.5 L331.5,503.9 L333.4,502.3 L335.2,500.6 L337.1,498.9 L338.9,497.1 L340.8,495.3 L342.7,493.5 L344.5,491.6 L346.4,489.6 L348.2,487.6 L350.1,485.5 L352.0,483.4 L353.8,481.2 L355.7,479.0 L357.5,476.7 L359.4,474.4 L361.2,472.0 L363.1,469.5 L365.0,467.0 L366.8,464.5 L368.7,461.8 L370.5,459.2 L372.4,456.4 L374.2,453.6 L376.1,450.8 L378.0,447.8 L379.8,444.9 L381.7,441.8 L383.5,438.7 L385.4,435.6 L387.2,432.4 L389.1,429.1 L391.0,425.8 L392.8,422.4 L394.7,419.0 L396.5,415.5 L398.4,412.0 L400.3,408.4 L402.1,404.8 L404.0,401.1 L405.8,397.3 L407.7,393.6 L409.5,389.8 L411.4,385.9 L413.3,382.0 L415.1,378.1 L417.0,374.2 L418.8,370.2 L420.7,366.2 L422.5,362.2 L424.4,358.2 L426.3,354.2 L428.1,350.1 L430.0,346.1 L431.8,342.0 L433.7,338.0 L435.6,334.0 L437.4,330.0 L439.3,326.0 L441.1,322.0 L443.0,318.1 L444.8,314.2 L446.7,310.3 L448.6,306.5 L450.4,302.8 L452.3,299.1 L454.1,295.4 L456.0,291.9 L457.8,288.4 L459.7,284.9 L461.6,281.6 L463.4,278.3 L465.3,275.2 L467.1,272.1 L469.0,269.1 L470.8,266.3 L472.7,263.5 L474.6,260.8 L476.4,258.3 L478.3,255.8 L480.1,253.5 L482.0,251.3 L483.9,249.2 L485.7,247.2 L487.6,245.3 L489.4,243.5 L491.3,241.9 L493.1,240.3 L495.0,238.9" fill="none" stroke="#d8d8d8" stroke-width="1" shape-rendering="crispEdges"/></g></svg>
<div class="t" style="left:941px;top:841px">logarithmic x axis</div>
<div class="cb" style="left:1052px;top:841px;background:#f2f2f2"></div>
<svg class="ab" style="left:1053px;top:842px" width="12" height="12"><path d="M2.2 6.2 L4.8 10 L9.8 2" fill="none" stroke="#111" stroke-width="1.9"/></svg>
<div class="t" style="left:1280px;top:841px">logarithmic y axis</div>
</body></html>
